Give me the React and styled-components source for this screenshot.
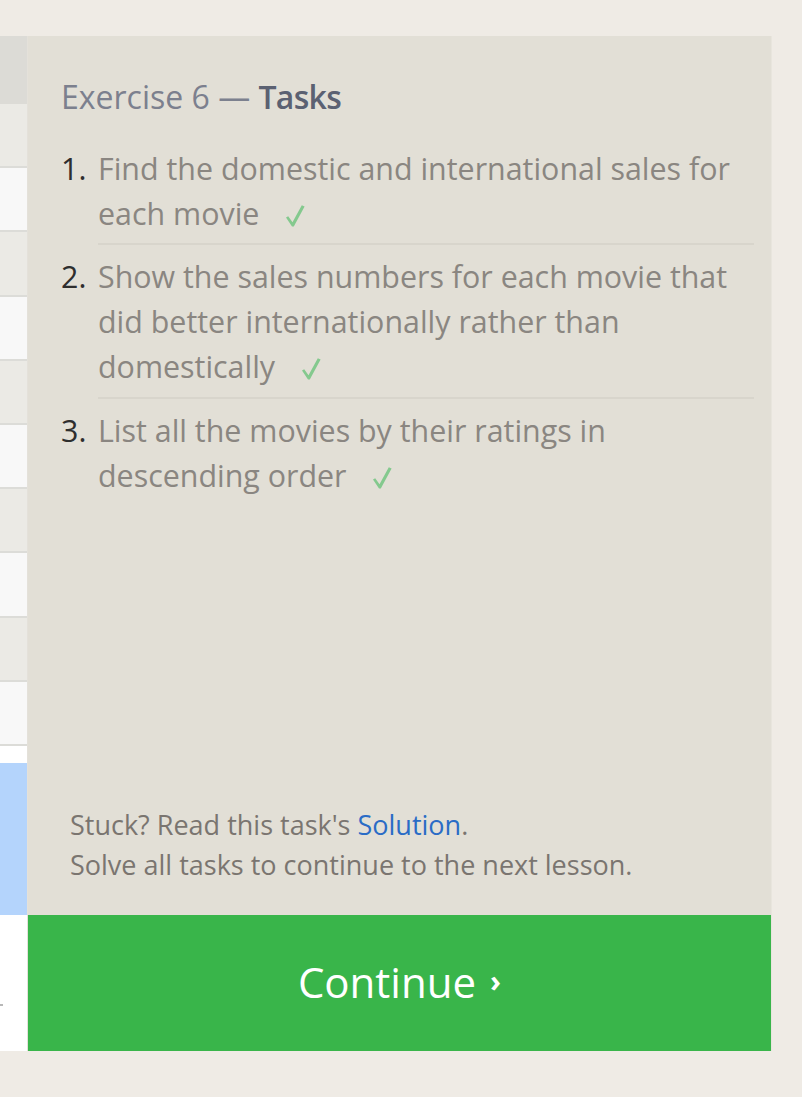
import React from "react";
import styled, { createGlobalStyle } from "styled-components";

const Global = createGlobalStyle`
  html, body { margin: 0; padding: 0; }
  body {
    background: #efebe5;
    font-family: "Open Sans", "Noto Sans", sans-serif;
    width: 802px;
    height: 1097px;
    overflow: hidden;
  }
`;

const Page = styled.div`
  display: flex;
  align-items: stretch;
  padding-top: 36px;
  height: 1015px;
`;

const Strip = styled.div`
  width: 27px;
  flex: none;
  display: flex;
  flex-direction: column;
  overflow: hidden;
  border-right: 1px solid #e4e1da;
`;

const StripHead = styled.div`
  height: 68px;
  background: #dcdbd6;
  flex: none;
`;

const StripRow = styled.div`
  height: 64.2px;
  box-sizing: border-box;
  flex: none;
  background: ${(p) => (p.$alt ? "#f8f8f8" : "#ebeae5")};
  border-bottom: 2px solid #dcdcd8;
`;

const StripGap = styled.div`
  height: 17px;
  background: #ffffff;
  flex: none;
`;

const StripSelect = styled.div`
  height: 152px;
  background: #b4d4fc;
  flex: none;
`;

const StripEditor = styled.div`
  flex: 1;
  background: #ffffff;
  display: flex;
  align-items: flex-end;
  padding-bottom: 45px;
`;

const Dash = styled.div`
  width: 3px;
  height: 2px;
  background: #b8b8b8;
`;

const Panel = styled.div`
  width: 743px;
  flex: none;
  background: #e2dfd6;
  border-right: 1px solid #e8e5dd;
  display: flex;
  flex-direction: column;
`;

const Body = styled.div`
  flex: 1;
  padding: 37.5px 17px 0 33px;
`;

const Title = styled.h1`
  margin: 0;
  font-size: 32px;
  line-height: 45px;
  font-weight: 400;
  color: #7c808e;
`;

const TitleStrong = styled.span`
  color: #5b6172;
  font-weight: 600;
  letter-spacing: -0.7px;
`;

const List = styled.ol`
  margin: 18px 0 0;
  padding: 0;
  list-style: none;
`;

const Item = styled.li`
  display: grid;
  grid-template-columns: 37px 1fr;
  font-size: 30.4px;
  line-height: 45px;
`;

const Num = styled.span`
  padding-top: 9px;
  color: #2e2e2e;
`;

const Text = styled.span`
  padding: 9px 0 7.5px;
  color: #8a8681;
  border-bottom: ${(p) => (p.$last ? "none" : "2px solid #d8d5cc")};
`;

const CheckIcon = styled.svg`
  width: 20px;
  height: 24px;
  margin-left: 26px;
  vertical-align: -3px;
`;

const Footer = styled.div`
  padding: 0 17px 30px 42px;
  font-size: 27px;
  line-height: 40px;
  color: #7a7570;
`;

const Link = styled.a`
  color: #2a6cc6;
  text-decoration: none;
`;

const ContinueButton = styled.button`
  height: 136px;
  border: none;
  margin: 0;
  padding: 0 0 4px;
  background: #39b54a;
  color: #ffffff;
  font-family: "Open Sans", "Noto Sans", sans-serif;
  font-size: 42px;
  display: flex;
  align-items: center;
  justify-content: center;
  gap: 14px;
  cursor: pointer;
`;

const Chevron = styled.span`
  font-size: 30px;
  font-weight: 700;
  line-height: 1;
`;

const Check = () => (
  <CheckIcon viewBox="0 0 20 24" aria-hidden="true">
    <path
      d="M1 13.5 L3.2 12.3 L7.5 18.3 L16.8 1.3 L19.6 2.6 L8.8 22.6 L7 22.6 Z"
      fill="#84c98e"
    />
  </CheckIcon>
);

const tasks = [
  { text: "Find the domestic and international sales for each movie" },
  {
    text: "Show the sales numbers for each movie that did better internationally rather than domestically",
  },
  { text: "List all the movies by their ratings in descending order" },
];

export default function App() {
  return (
    <>
      <Global />
      <Page>
        <Strip>
          <StripHead />
          {Array.from({ length: 10 }).map((_, i) => (
            <StripRow key={i} $alt={i % 2 === 1} />
          ))}
          <StripGap />
          <StripSelect />
          <StripEditor>
            <Dash />
          </StripEditor>
        </Strip>
        <Panel>
          <Body>
            <Title>
              Exercise 6 — <TitleStrong>Tasks</TitleStrong>
            </Title>
            <List>
              {tasks.map((t, i) => (
                <Item key={i}>
                  <Num>{i + 1}.</Num>
                  <Text $last={i === tasks.length - 1}>
                    {t.text}
                    <Check />
                  </Text>
                </Item>
              ))}
            </List>
          </Body>
          <Footer>
            Stuck? Read this task's <Link href="#">Solution</Link>.
            <br />
            Solve all tasks to continue to the next lesson.
          </Footer>
          <ContinueButton>
            Continue <Chevron>›</Chevron>
          </ContinueButton>
        </Panel>
      </Page>
    </>
  );
}
